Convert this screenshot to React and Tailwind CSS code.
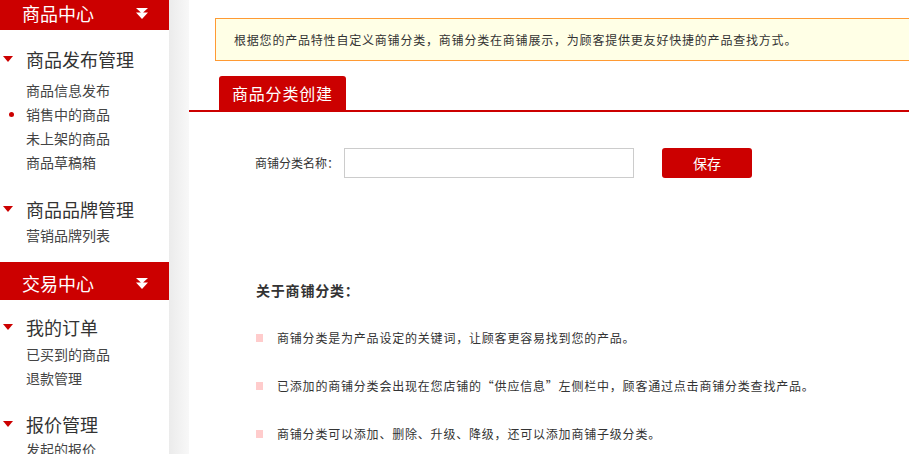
import React from "react";

const font = "font-['Noto_Sans_CJK_SC','Liberation_Sans',sans-serif]";

function HeaderArrow() {
  return (
    <svg width="12" height="11" viewBox="0 0 12 11" className="fill-white">
      <path d="M0 0h12l-6 5.5z M0 4.5h12l-6 6.5z" />
    </svg>
  );
}

function SideHeader({ title, className }) {
  return (
    <div className={`h-[38px] pt-1 bg-[#cc0000] flex items-center justify-between pl-[22px] pr-[21px] ${className}`}>
      <span className="text-white text-[18px] leading-[26px]">{title}</span>
      <HeaderArrow />
    </div>
  );
}

function GroupTitle({ title, className }) {
  return (
    <div className={`flex items-center h-[26px] ${className}`}>
      <span className="w-0 h-0 ml-[3px] border-l-[5px] border-r-[5px] border-t-[6px] border-l-transparent border-r-transparent border-t-[#cc0000]" />
      <span className="ml-[13px] text-[18px] leading-[26px] text-[#333]">{title}</span>
    </div>
  );
}

function SubItem({ label, active, className = "" }) {
  return (
    <div className={`relative h-[24px] flex items-center pl-[26px] text-[14px] text-[#444] ${className}`}>
      {active && <span className="absolute left-[9px] top-[10px] w-[5px] h-[5px] rounded-full bg-[#cc0000]" />}
      {label}
    </div>
  );
}

export default function App() {
  const tips = [
    "商铺分类是为产品设定的关键词，让顾客更容易找到您的产品。",
    "已添加的商铺分类会出现在您店铺的“供应信息”左侧栏中，顾客通过点击商铺分类查找产品。",
    "商铺分类可以添加、删除、升级、降级，还可以添加商铺子级分类。",
  ];

  return (
    <div className={`w-[909px] h-[454px] overflow-hidden flex items-start bg-white ${font}`}>
      {/* Sidebar */}
      <div className="w-[169px] shrink-0">
        <SideHeader title="商品中心" className="-mt-[8px]" />

        <GroupTitle title="商品发布管理" className="mt-[16px]" />
        <div className="mt-[6px]">
          <SubItem label="商品信息发布" />
          <SubItem label="销售中的商品" active />
          <SubItem label="未上架的商品" />
          <SubItem label="商品草稿箱" />
        </div>

        <GroupTitle title="商品品牌管理" className="mt-[22px]" />
        <SubItem label="营销品牌列表" className="mt-[1px]" />

        <SideHeader title="交易中心" className="mt-[15px]" />

        <GroupTitle title="我的订单" className="mt-[14px]" />
        <div className="mt-[2px]">
          <SubItem label="已买到的商品" />
          <SubItem label="退款管理" />
        </div>

        <GroupTitle title="报价管理" className="mt-[21px]" />
        <SubItem label="发起的报价" />
      </div>

      <div className="w-[20px] h-[454px] shrink-0 bg-linear-to-r from-[#ebebeb] to-[#f8f8f8]" />

      {/* Main */}
      <div className="flex-1 min-w-0 overflow-hidden">
        <div className="mt-[18px] ml-[26px] w-[720px] h-[43px] border border-[#ff9a33] bg-[#ffffe6] pl-[18px] flex items-center text-[12px] tracking-[0.8px] text-[#333]">
          根据您的产品特性自定义商铺分类，商铺分类在商铺展示，为顾客提供更友好快捷的产品查找方式。
        </div>

        <div className="mt-[15px] pl-[30px] flex">
          <div className="h-[34px] rounded-t-[3px] bg-[#cc0000] px-[13px] flex items-center text-white text-[16px] tracking-[0.8px]">
            商品分类创建
          </div>
        </div>
        <div className="h-[2px] bg-[#cc0000]" />

        <div className="mt-[36px] ml-[66px] flex items-center">
          <label className="w-[89px] text-[12px] text-[#333]">商铺分类名称：</label>
          <input type="text" className="w-[290px] h-[30px] border border-[#ccc] outline-none px-2 text-[12px]" />
          <button className="ml-[28px] w-[90px] h-[30px] rounded-[3px] bg-[#cc0000] text-white text-[14px]">
            保存
          </button>
        </div>

        <div className="mt-[102px] ml-[67px] text-[14px] leading-[20px] font-bold tracking-[0.8px] text-[#333]">
          关于商铺分类：
        </div>

        <div className="ml-[67px]">
          {tips.map((t) => (
            <div key={t} className="mt-[28px] h-[20px] flex items-center text-[12px] tracking-[0.8px] text-[#333]">
              <span className="w-[7px] h-[8px] bg-[#ffcccc] shrink-0" />
              <span className="ml-[14px] whitespace-nowrap">{t}</span>
            </div>
          ))}
        </div>
      </div>
    </div>
  );
}
